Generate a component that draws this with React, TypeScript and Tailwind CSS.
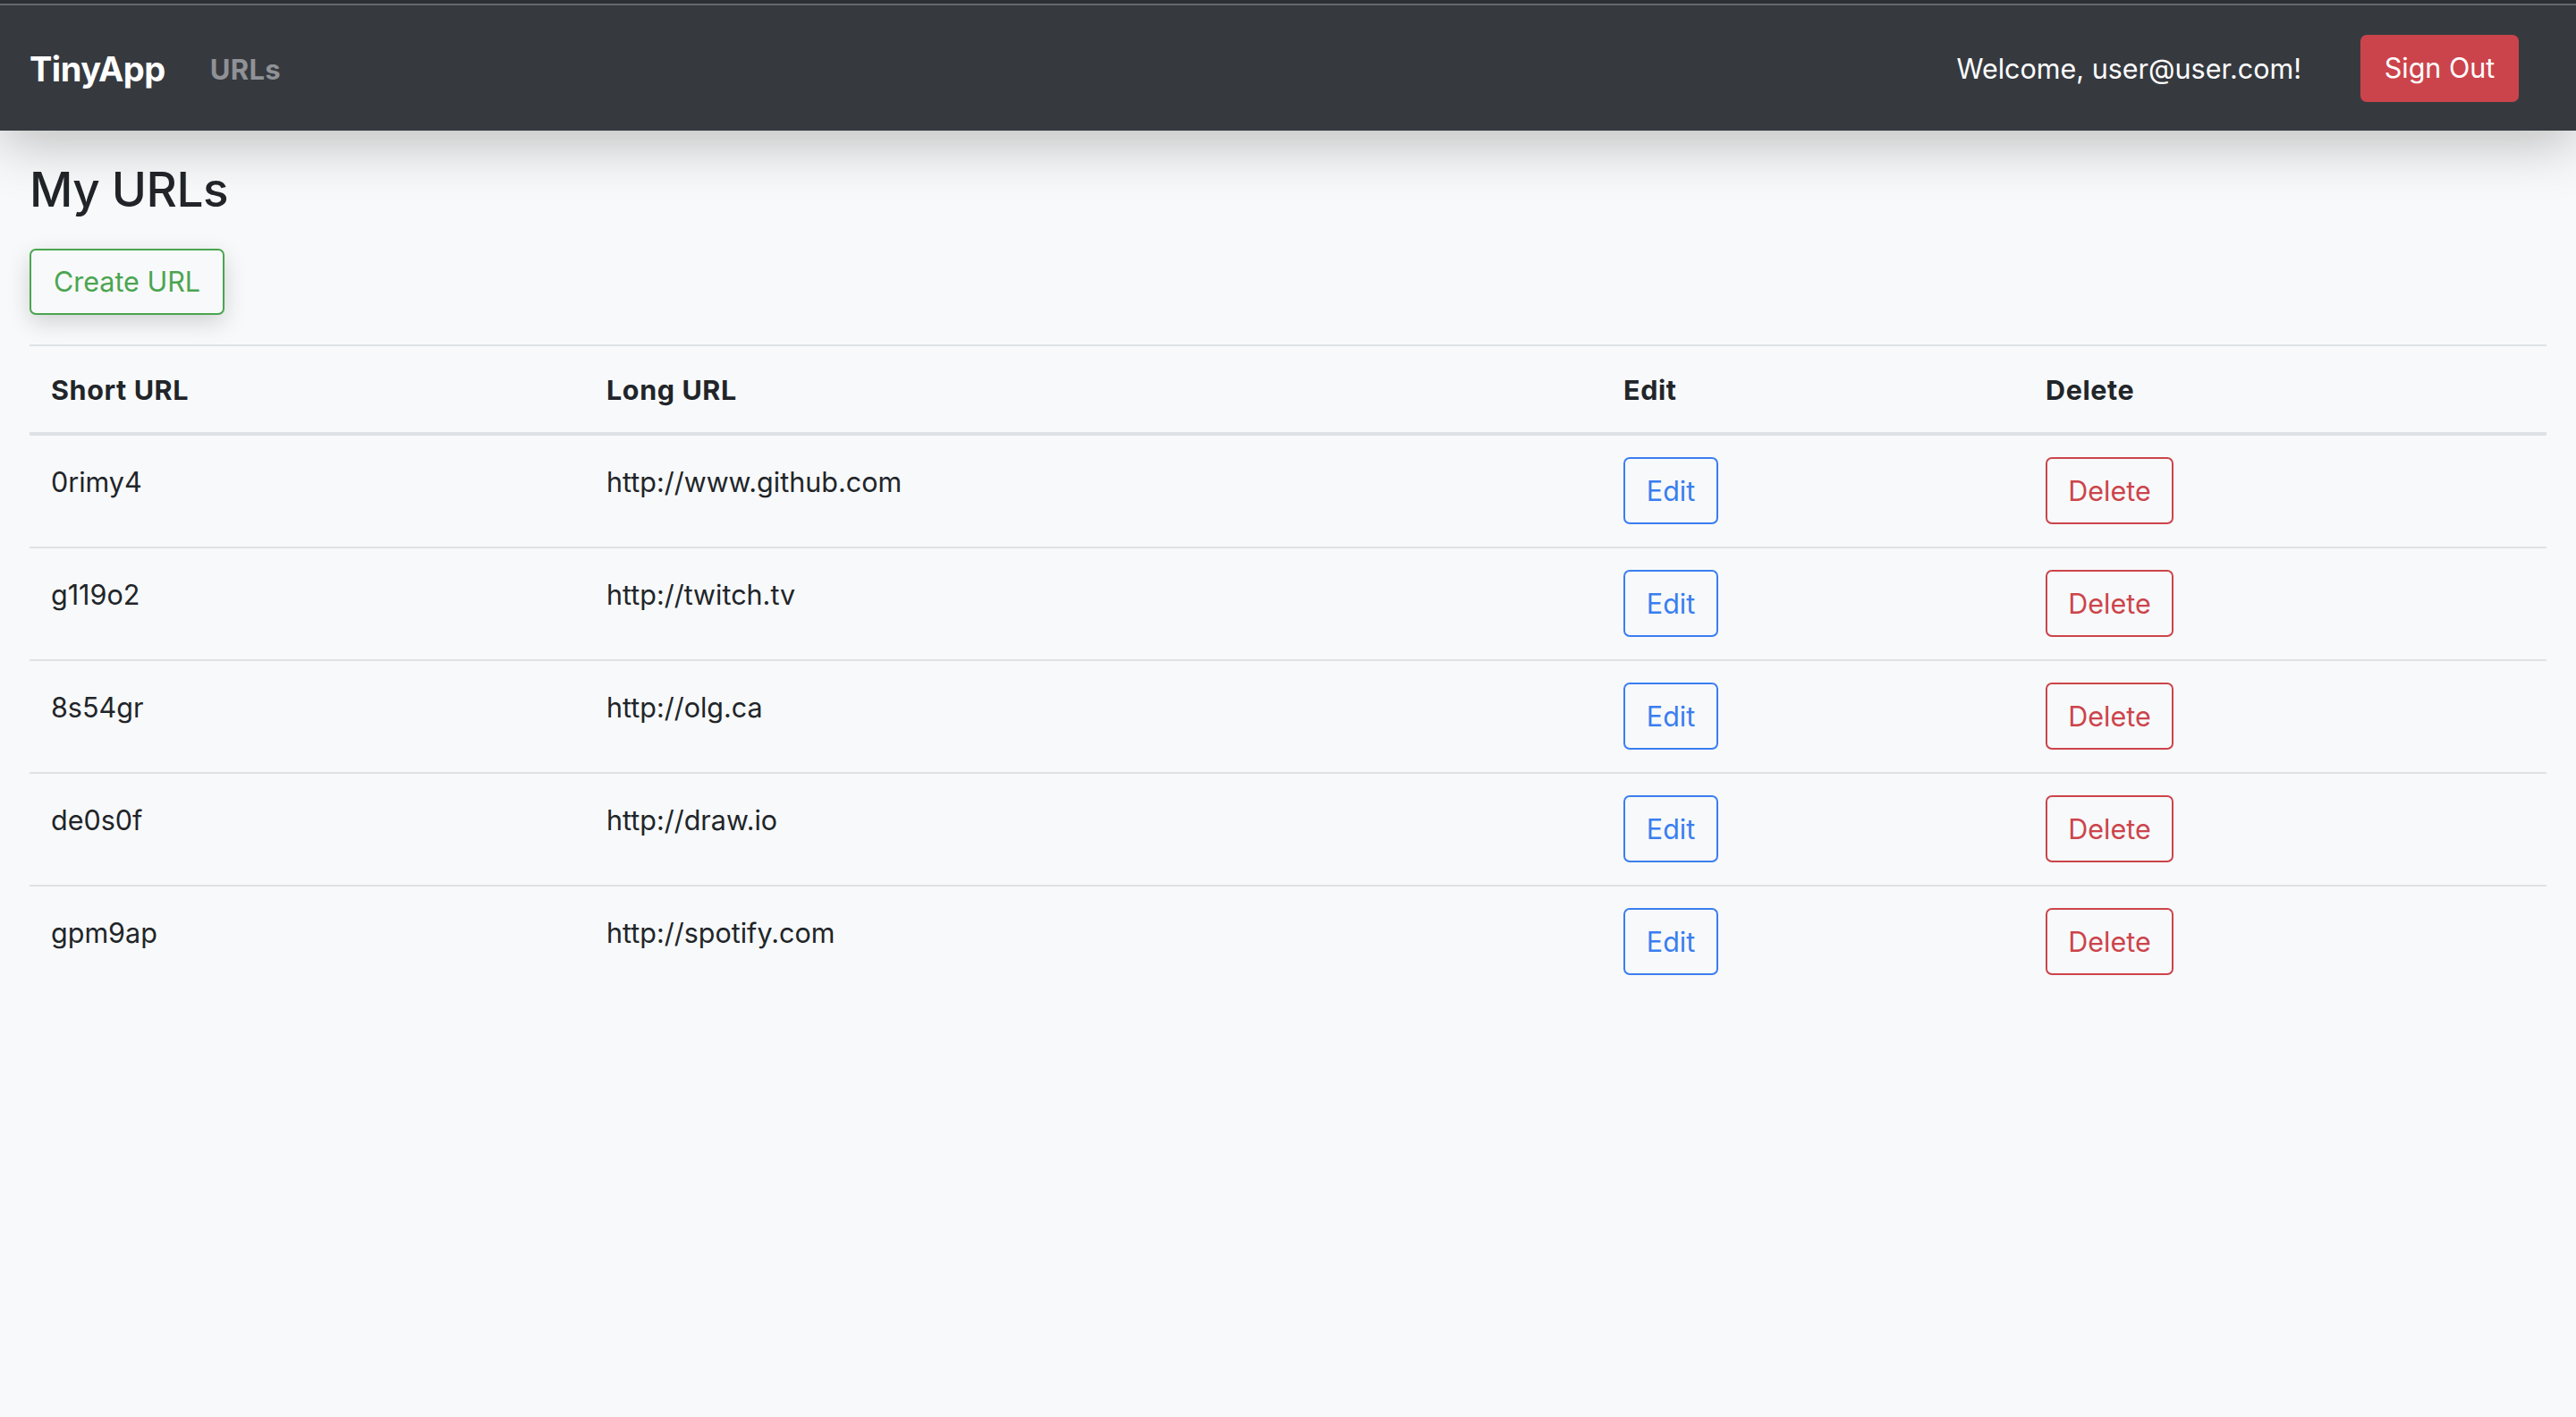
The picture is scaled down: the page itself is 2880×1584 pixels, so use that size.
import React from "react"

type UrlRow = { short: string; long: string }

const urls: UrlRow[] = [
  { short: "0rimy4", long: "http://www.github.com" },
  { short: "g119o2", long: "http://twitch.tv" },
  { short: "8s54gr", long: "http://olg.ca" },
  { short: "de0s0f", long: "http://draw.io" },
  { short: "gpm9ap", long: "http://spotify.com" },
]

function Navbar() {
  return (
    <div className="relative z-10 shadow-[0_12px_64px_rgba(0,0,0,0.26)]">
      <div className="h-[4px] bg-[#2c2f33]" />
      <div className="h-[2px] bg-[#65686c]" />
      <nav className="h-[140px] bg-[#363a3f] flex items-center pl-[33px] pr-[64px]">
        <a className="text-white font-bold text-[38px] tracking-[-0.5px] leading-none pt-[2px]">TinyApp</a>
        <a className="ml-[50px] text-[#8f9296] font-bold text-[31px] tracking-[0.3px] leading-none pt-[2px]">URLs</a>
        <div className="ml-auto flex items-center gap-[66px]">
          <span className="text-white text-[30.5px] leading-none pt-[2px]">Welcome, user@user.com!</span>
          <button className="w-[177px] h-[75px] rounded-[7px] bg-[#cc444b] text-white text-[30.5px] flex items-center justify-center">
            Sign Out
          </button>
        </div>
      </nav>
    </div>
  )
}

export default function App() {
  return (
    <div className="min-h-screen bg-[#f8f9fa] text-[#212529] font-['Inter',_'Liberation_Sans',_sans-serif]">
      <Navbar />

      <main className="px-[33px]">
        {/* heading + create */}
        <h2 className="mt-[33px] text-[53px] leading-[66px] font-medium tracking-[-0.5px]">My URLs</h2>
        <button className="mt-[33px] w-[218px] h-[74px] rounded-[7px] border-2 border-[#4aa550] text-[#4aa550] text-[30.5px] flex items-center justify-center bg-[#f8f9fa] shadow-[0_8px_26px_rgba(0,0,0,0.16)]">
          Create URL
        </button>

        <table className="mt-[33px] w-full table-fixed border-collapse text-[30.5px] leading-[44px]">
          <colgroup>
            <col className="w-[621px]" />
            <col className="w-[1137px]" />
            <col className="w-[472px]" />
            <col />
          </colgroup>
          <thead>
            <tr className="border-t-2 border-b-4 border-[#dee2e6]">
              <th className="text-left font-bold tracking-[0.6px] px-[24px] pt-[27px] pb-[25px]">Short URL</th>
              <th className="text-left font-bold tracking-[0.6px] px-[24px] pt-[27px] pb-[25px]">Long URL</th>
              <th className="text-left font-bold tracking-[0.6px] px-[24px] pt-[27px] pb-[25px]">Edit</th>
              <th className="text-left font-bold tracking-[0.6px] px-[24px] pt-[27px] pb-[25px]">Delete</th>
            </tr>
          </thead>
          <tbody>
            {urls.map((u, i) => (
              <tr key={u.short} className={i < urls.length - 1 ? "border-b-2 border-[#dee2e6]" : ""}>
                <td className="align-top px-[24px] pt-[30px]">{u.short}</td>
                <td className="align-top px-[24px] pt-[30px]">{u.long}</td>
                <td className="align-top px-[24px] pt-[24px] pb-[25px]">
                  <button className="w-[106px] h-[75px] rounded-[7px] border-2 border-[#3a7ef0] text-[#3a7ef0] flex items-center justify-center">
                    Edit
                  </button>
                </td>
                <td className="align-top px-[24px] pt-[24px] pb-[25px]">
                  <button className="w-[143px] h-[75px] rounded-[7px] border-2 border-[#cc444b] text-[#cc444b] flex items-center justify-center">
                    Delete
                  </button>
                </td>
              </tr>
            ))}
          </tbody>
        </table>
      </main>
    </div>
  )
}
